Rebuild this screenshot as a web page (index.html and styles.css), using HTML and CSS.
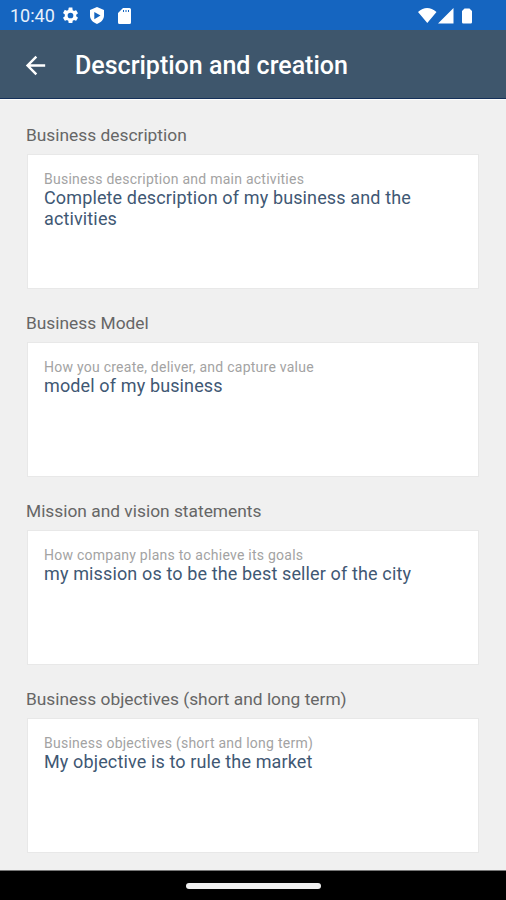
FILE: index.html
```html
<!DOCTYPE html>
<html lang="en">
<head>
<meta charset="utf-8">
<title>Description and creation</title>
<link rel="stylesheet" href="styles.css">
</head>
<body>
<div class="status">
  <span class="time">10:40</span>
  <svg class="gear" viewBox="0 0 24 24" width="19" height="19"><path fill="#fff" d="M19.14 12.94c.04-.3.06-.61.06-.94s-.02-.64-.07-.94l2.03-1.58a.49.49 0 0 0 .12-.61l-1.92-3.32a.49.49 0 0 0-.59-.22l-2.39.96a7 7 0 0 0-1.62-.94l-.36-2.54A.48.48 0 0 0 13.92 2h-3.84a.48.48 0 0 0-.47.41l-.36 2.54a7 7 0 0 0-1.62.94l-2.39-.96a.49.49 0 0 0-.59.22L2.73 8.47a.48.48 0 0 0 .12.61l2.03 1.58a7 7 0 0 0 0 2.28l-2.03 1.58a.49.49 0 0 0-.12.61l1.92 3.32c.12.22.37.29.59.22l2.39-.96c.5.38 1.03.7 1.62.94l.36 2.54c.05.24.24.41.48.41h3.84c.24 0 .44-.17.47-.41l.36-2.54a7 7 0 0 0 1.62-.94l2.39.96c.22.08.47 0 .59-.22l1.92-3.32a.48.48 0 0 0-.12-.61zM12 15.6a3.6 3.6 0 1 1 0-7.2 3.6 3.6 0 0 1 0 7.2z"/></svg>
  <svg class="shield" viewBox="0 0 18 20" width="18" height="20"><path fill="#fff" fill-rule="evenodd" d="M9 1 16 4v5.500c0 4-3 7-7 8.500-4-1.500-7-4.500-7-8.500V4zM6.300 6v7.200L12.500 9.600z"/></svg>
  <svg class="card" viewBox="0 0 15 18" width="15" height="18"><path fill="#fff" fill-rule="evenodd" d="M6 1h6.500q1.500 0 1.500 1.500v13q0 1.500-1.500 1.500h-10Q1 17 1 15.500V6zM6 3v2h1V3zM8.500 3v2h1V3zM11 3v2h1V3z"/></svg>
  <svg class="system" viewBox="0 0 56 20" width="56" height="20"><path fill="#fff" d="M0 6Q9-2 18.500 6L9.300 17zM20 17.500 35.500 2V17.500zM44 5l2.500-2.500h5L54 5v11.200q0 1.300-1.300 1.300h-7.400Q44 17.500 44 16.200z"/></svg>
</div>
<header class="bar">
  <svg class="back" viewBox="0 0 24 24" width="29" height="29"><path fill="#fff" d="M20 11H7.830l5.590-5.590L12 4l-8 8 8 8 1.410-1.410L7.830 13H20z"/></svg>
  <h1>Description and creation</h1>
</header>
<main class="content">
  <section><h2>Business description</h2><div class="box"><p class="hint">Business description and main activities</p><p class="value">Complete description of my business and the activities</p></div></section>
  <section><h2>Business Model</h2><div class="box"><p class="hint">How you create, deliver, and capture value</p><p class="value">model of my business</p></div></section>
  <section><h2>Mission and vision statements</h2><div class="box"><p class="hint">How company plans to achieve its goals</p><p class="value">my mission os to be the best seller of the city</p></div></section>
  <section><h2>Business objectives (short and long term)</h2><div class="box"><p class="hint">Business objectives (short and long term)</p><p class="value">My objective is to rule the market</p></div></section>
</main>
<footer class="nav"><div class="pill"></div></footer>
</body>
</html>
```
FILE: styles.css
```css
* { box-sizing: border-box; margin: 0; padding: 0; }
body { width: 506px; height: 900px; overflow: hidden; display: flex; flex-direction: column; font-family: Roboto, "Liberation Sans", sans-serif; background: #f0f0f0; }
svg { display: block; flex: none; }
.status { flex: none; height: 30px; background: #1565c0; display: flex; align-items: center; padding: 1px 32px 0 10px; }
.time { font-size: 18px; line-height: 20px; color: #e8f1fc; padding-top: 1px; }
.gear { margin-left: 6px; }
.shield { margin-left: 8px; }
.card { margin-left: 11px; }
.system { margin-left: auto; }
.bar { flex: none; height: 69px; background: #3e566c; display: flex; align-items: center; padding: 2px 0 0 21px; border-bottom: 1px solid #14305a; }
.bar h1 { margin-left: 25px; padding-top: 2px; color: #fff; font-size: 25px; font-weight: 500; line-height: 32px; }
.content { flex: 1; min-height: 0; padding: 24px 27px 0; border-top: 1px solid #fcfcfc; }
section { height: 188px; }
h2 { font-size: 17.35px; line-height: 22px; font-weight: 400; color: #666; margin-left: -1px; }
.box { height: 135px; margin-top: 8px; background: #fff; border: 1px solid #e8e8e8; padding: 16px 15px 0 16px; }
.hint { font-size: 14px; line-height: 16px; letter-spacing: 0.25px; color: #a3a3a3; white-space: nowrap; }
.value { font-size: 18px; line-height: 21px; letter-spacing: 0.13px; color: #3f5874; }
.nav { flex: none; height: 30px; background: #000; display: flex; justify-content: center; align-items: center; border-top: 1px solid #777; }
.pill { width: 135px; height: 6px; border-radius: 3px; background: #f0f0f0; }
```
